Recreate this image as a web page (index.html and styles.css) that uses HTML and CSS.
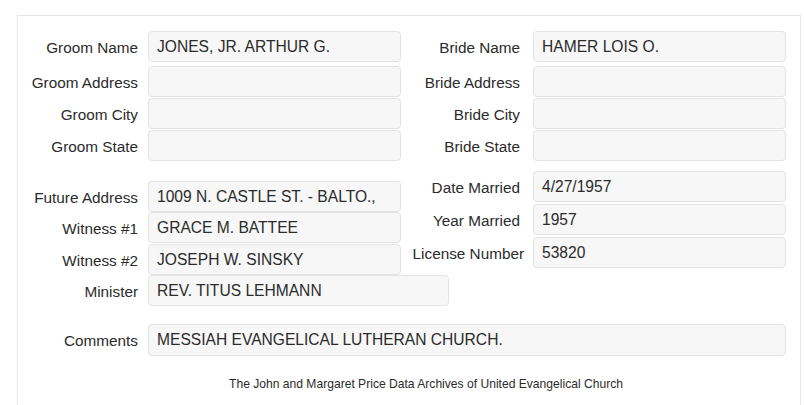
FILE: index.html
```html
<!DOCTYPE html>
<html lang="en">
<head>
    <meta charset="UTF-8">
    <title>Marriage Record</title>
    <link rel="stylesheet" href="styles.css">
</head>
<body>
    <div class="panel">
        <div class="section top">
            <div class="col">
                <div class="row first"><span class="label">Groom Name</span><div class="field">JONES, JR. ARTHUR G.</div></div>
                <div class="row"><span class="label">Groom Address</span><div class="field"></div></div>
                <div class="row"><span class="label">Groom City</span><div class="field"></div></div>
                <div class="row"><span class="label">Groom State</span><div class="field"></div></div>
            </div>
            <div class="col right">
                <div class="row first"><span class="label">Bride Name</span><div class="field">HAMER LOIS O.</div></div>
                <div class="row"><span class="label">Bride Address</span><div class="field"></div></div>
                <div class="row"><span class="label">Bride City</span><div class="field"></div></div>
                <div class="row"><span class="label">Bride State</span><div class="field"></div></div>
            </div>
        </div>

        <div class="section middle">
            <div class="col left-lower">
                <div class="row"><span class="label">Future Address</span><div class="field">1009 N. CASTLE ST. - BALTO.,</div></div>
                <div class="row"><span class="label">Witness #1</span><div class="field">GRACE M. BATTEE</div></div>
                <div class="row"><span class="label">Witness #2</span><div class="field">JOSEPH W. SINSKY</div></div>
            </div>
            <div class="col right right-lower">
                <div class="row"><span class="label">Date Married</span><div class="field">4/27/1957</div></div>
                <div class="row"><span class="label">Year Married</span><div class="field">1957</div></div>
                <div class="row"><span class="label wide">License Number</span><div class="field">53820</div></div>
            </div>
        </div>

        <div class="row minister"><span class="label">Minister</span><div class="field">REV. TITUS LEHMANN</div></div>

        <div class="row comments"><span class="label">Comments</span><div class="field">MESSIAH EVANGELICAL LUTHERAN CHURCH.</div></div>

        <div class="footer">The John and Margaret Price Data Archives of United Evangelical Church</div>
    </div>
</body>
</html>
```

FILE: styles.css
```css
html, body {
    height: 100%;
    overflow: hidden;
}
body {
    margin: 0;
    font-family: "Liberation Sans", Arial, sans-serif;
    font-size: 15px;
    color: #2b2b2b;
    background-color: #fff;
}
.panel {
    box-sizing: border-box;
    width: 784px;
    height: calc(100% - 15px);
    margin: 15px 0 0 17px;
    border: 1px solid #e6e6e6;
    border-bottom: none;
    padding: 15px 14px 0 0;
}
.section {
    display: flex;
    align-items: flex-start;
}
.col {
    display: flex;
    flex-direction: column;
    width: 383px;
    flex-shrink: 0;
}
.row {
    display: flex;
    align-items: center;
}
.label {
    width: 130px;
    flex-shrink: 0;
    box-sizing: border-box;
    padding-right: 10px;
    text-align: right;
    white-space: nowrap;
    padding-top: 2px;
    font-size: 15.3px;
}
.right .label {
    width: 132px;
    padding-right: 13px;
}
.right .label.wide {
    padding-right: 9px;
}
.field {
    width: 253px;
    height: 31px;
    flex-shrink: 0;
    box-sizing: border-box;
    background-color: #f7f7f7;
    border: 1px solid #e3e3e3;
    border-radius: 4px;
    padding: 0 8px;
    line-height: 29px;
    font-size: 15.6px;
    white-space: nowrap;
    overflow: hidden;
}
.top .row {
    margin-bottom: 1px;
}
.top .row.first {
    margin-bottom: 4px;
}
.left-lower {
    margin-top: 19px;
}
.left-lower .row:nth-child(2) {
    margin-bottom: 1px;
}
.right-lower {
    margin-top: 9px;
}
.right-lower .row {
    margin-bottom: 2px;
}
.minister .field {
    width: 301px;
}
.comments {
    margin-top: 18px;
}
.comments .field {
    width: 638px;
    height: 32px;
    line-height: 30px;
}
.footer {
    padding: 21px 0 0 48px;
    text-align: center;
    font-size: 12.1px;
}
```
